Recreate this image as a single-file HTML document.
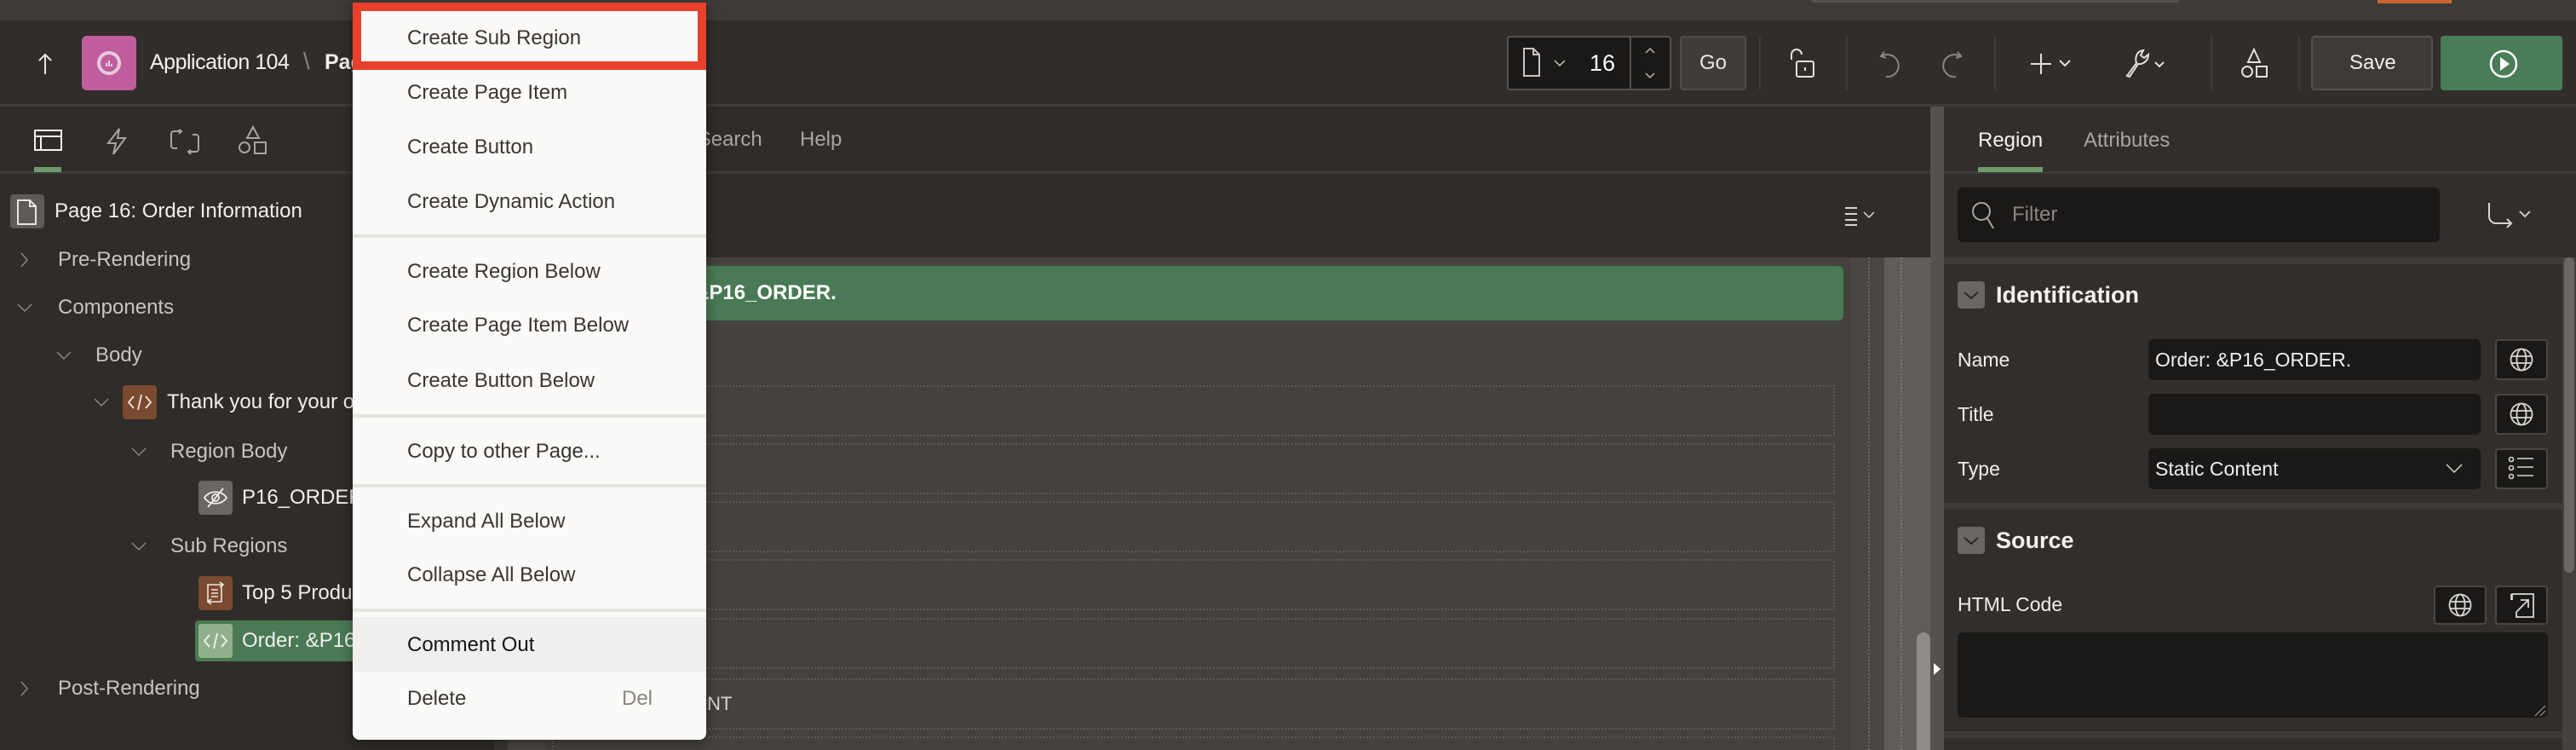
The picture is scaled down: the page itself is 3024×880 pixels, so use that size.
<!DOCTYPE html>
<html style="width:3024px;height:880px;overflow:hidden"><head><meta charset="utf-8"><style>
*{margin:0;padding:0;box-sizing:border-box}
body{width:3024px;height:880px;overflow:hidden;background:#2f2c29;font-family:"Liberation Sans",sans-serif;position:relative}
.a{position:absolute}
.t{position:absolute;white-space:nowrap;line-height:1}
svg{position:absolute;overflow:visible}
.mi{position:absolute;left:478px;font-size:24px;color:#3a3632;white-space:nowrap;transform:translateY(-50%)}
.sep{position:absolute;left:414px;width:415px;height:4px;background:#e6e4e1}
.tl{color:#c8c4bf;font-size:24px}
.tw{color:#f1efed;font-size:24px}
.dot{position:absolute;left:648px;width:1506px;height:60px;border:2px dotted #5e5a55;border-radius:2px}
.ib{position:absolute;background:#1a1917;border:2px solid #4a4743;border-radius:4px}
.inp{position:absolute;background:#1a1917;border-radius:6px}
</style></head><body>
<!-- top strip -->
<div class="a" style="left:0;top:0;width:3024px;height:24px;background:#3e3b37"></div>
<div class="a" style="left:2126px;top:0;width:432px;height:3px;background:#55524e;border-radius:0 0 4px 4px"></div>
<div class="a" style="left:2791px;top:0;width:87px;height:4px;background:#c8652f"></div>
<!-- header -->
<div class="a" style="left:0;top:24px;width:3024px;height:98px;background:#312d2a"></div>
<div class="a" style="left:0;top:122px;width:3024px;height:3px;background:#3e3b37"></div>
<svg style="left:44px;top:62px" width="18" height="26"><path d="M9 2V25M2 9L9 2L16 9" fill="none" stroke="#e8e6e3" stroke-width="2"/></svg>
<div class="a" style="left:96px;top:42px;width:64px;height:64px;background:#bf5d9d;border-radius:6px"></div>
<svg style="left:112px;top:58px" width="32" height="32"><circle cx="16" cy="16" r="12" fill="none" stroke="#e9c9dd" stroke-width="4"/><path d="M13 20v-4M16 20v-7M19 20v-3" stroke="#fff" stroke-width="1.5"/></svg>
<div class="t" style="left:176px;top:61px;font-size:25px;color:#f4f2f0;letter-spacing:-0.5px">Application 104</div>
<div class="t" style="left:356px;top:58px;font-size:28px;color:#8a8682">\</div>
<div class="t" style="left:381px;top:61px;font-size:25px;color:#f4f2f0;font-weight:bold">Page</div>

<!-- toolbar -->
<div class="a" style="left:1769px;top:42px;width:193px;height:64px;background:#1a1917;border:2px solid #55514d;border-radius:4px"></div>
<div class="a" style="left:1913px;top:44px;width:2px;height:60px;background:#55514d"></div>
<svg style="left:1788px;top:56px" width="20" height="34"><path d="M1 1H12L19 8V33H1Z M12 1V8H19" fill="none" stroke="#c9c5c0" stroke-width="2"/></svg>
<svg style="left:1824px;top:70px" width="14" height="8"><path d="M1 1L7 7L13 1" fill="none" stroke="#c9c5c0" stroke-width="1.5"/></svg>
<div class="t" style="left:1866px;top:61px;font-size:27px;color:#fff">16</div>
<svg style="left:1930px;top:54px" width="14" height="40"><path d="M2 8L7 3L12 8M2 32L7 37L12 32" fill="none" stroke="#b8b4af" stroke-width="1.5"/></svg>
<div class="a" style="left:1972px;top:42px;width:78px;height:64px;background:#403d39;border:2px solid #4f4b47;border-radius:4px"></div>
<div class="t" style="left:1995px;top:62px;font-size:24px;color:#e8e6e3">Go</div>
<div class="a" style="left:2065px;top:42px;width:2px;height:64px;background:#3f3c38"></div>
<div class="a" style="left:2167px;top:42px;width:2px;height:64px;background:#3f3c38"></div>
<div class="a" style="left:2341px;top:42px;width:2px;height:64px;background:#3f3c38"></div>
<div class="a" style="left:2595px;top:42px;width:2px;height:64px;background:#3f3c38"></div>
<div class="a" style="left:2698px;top:42px;width:2px;height:64px;background:#3f3c38"></div>
<svg style="left:2100px;top:58px" width="34" height="34"><path d="M3 12V6a6 6 0 0 1 12 0" fill="none" stroke="#e3e1de" stroke-width="2"/><rect x="9" y="14" width="20" height="18" rx="2" fill="none" stroke="#e3e1de" stroke-width="2"/><path d="M19 21v4" stroke="#e3e1de" stroke-width="2"/></svg>
<svg style="left:2206px;top:58px" width="26" height="34"><path d="M6 3L2 8L8 10 M3 8A13 13 0 1 1 8 32" fill="none" stroke="#8a8682" stroke-width="2"/></svg>
<svg style="left:2278px;top:58px" width="26" height="34"><path d="M20 3L24 8L18 10 M23 8A13 13 0 1 0 18 32" fill="none" stroke="#8a8682" stroke-width="2"/></svg>
<svg style="left:2384px;top:62px" width="56" height="26"><path d="M12 1V25M0 13H24M34 9L40 15L46 9" fill="none" stroke="#e3e1de" stroke-width="2"/></svg>
<svg style="left:2494px;top:56px" width="52" height="36"><path d="M3 33L14 18C12 12 14 4 22 3L19 9L23 12L28 8C28 15 22 20 16 19L6 34Z" fill="none" stroke="#e3e1de" stroke-width="2"/><path d="M36 17L41 22L46 17" fill="none" stroke="#e3e1de" stroke-width="2"/></svg>
<svg style="left:2630px;top:56px" width="34" height="36"><path d="M16 2L23 17H9Z" fill="none" stroke="#e3e1de" stroke-width="2"/><circle cx="8" cy="28" r="6" fill="none" stroke="#e3e1de" stroke-width="2"/><rect x="19" y="22" width="12" height="12" fill="none" stroke="#e3e1de" stroke-width="2"/></svg>
<div class="a" style="left:2713px;top:42px;width:143px;height:64px;background:#3e3b37;border:2px solid #55514d;border-radius:4px"></div>
<div class="t" style="left:2758px;top:62px;font-size:24px;color:#f1efed">Save</div>
<div class="a" style="left:2865px;top:42px;width:143px;height:64px;background:#4a7d57;border-radius:4px"></div>
<svg style="left:2922px;top:58px" width="34" height="34"><circle cx="17" cy="17" r="15" fill="none" stroke="#fff" stroke-width="2.5"/><path d="M13 9L24 17L13 25Z" fill="#fff"/></svg>

<!-- left panel -->
<div class="a" style="left:0;top:125px;width:580px;height:755px;background:#2f2c29"></div>
<div class="a" style="left:0;top:201px;width:580px;height:3px;background:#3e3b37"></div>
<svg style="left:40px;top:152px" width="34" height="26"><rect x="1" y="1" width="31" height="23" fill="none" stroke="#f4f2f0" stroke-width="2"/><path d="M1 8H32M8 8V24" stroke="#f4f2f0" stroke-width="2"/></svg>
<div class="a" style="left:40px;top:196px;width:32px;height:6px;background:#6f9a6c"></div>
<svg style="left:124px;top:150px" width="26" height="32"><path d="M16 1L3 18H12L9 31L23 12H14Z" fill="none" stroke="#a9a5a0" stroke-width="2"/></svg>
<svg style="left:200px;top:152px" width="34" height="28"><path d="M12 2H4a3 3 0 0 0-3 3v14a3 3 0 0 0 3 3H8M22 26H30a3 3 0 0 0 3-3V9a3 3 0 0 0-3-3H26M10 0L13 2L10 5M24 24L21 26L24 29" fill="none" stroke="#a9a5a0" stroke-width="2"/></svg>
<svg style="left:280px;top:148px" width="34" height="34"><path d="M17 1L24 14H10Z" fill="none" stroke="#a9a5a0" stroke-width="2"/><circle cx="7" cy="25" r="6" fill="none" stroke="#a9a5a0" stroke-width="2"/><rect x="19" y="19" width="13" height="13" fill="none" stroke="#a9a5a0" stroke-width="2"/></svg>

<div class="a" style="left:12px;top:228px;width:40px;height:40px;background:#5e5a55;border-radius:4px"></div>
<svg style="left:20px;top:234px" width="24" height="30"><path d="M1 1H15L22 8V29H1Z M15 1V8H22" fill="none" stroke="#e8e6e3" stroke-width="2"/></svg>
<div class="t tw" style="left:64px;top:236px;font-size:24px">Page 16: Order Information</div>

<svg style="left:24px;top:296px" width="10" height="18"><path d="M1 1L8 9L1 17" fill="none" stroke="#8a8682" stroke-width="1.5"/></svg>
<div class="t tl" style="left:68px;top:293px">Pre-Rendering</div>
<svg style="left:20px;top:356px" width="18" height="10"><path d="M1 1L9 9L17 1" fill="none" stroke="#8a8682" stroke-width="1.5"/></svg>
<div class="t tl" style="left:68px;top:349px">Components</div>
<svg style="left:66px;top:412px" width="18" height="10"><path d="M1 1L9 9L17 1" fill="none" stroke="#8a8682" stroke-width="1.5"/></svg>
<div class="t tl" style="left:112px;top:405px">Body</div>
<svg style="left:110px;top:467px" width="18" height="10"><path d="M1 1L9 9L17 1" fill="none" stroke="#8a8682" stroke-width="1.5"/></svg>
<div class="a" style="left:144px;top:452px;width:40px;height:40px;background:#7a4a30;border-radius:4px"></div>
<svg style="left:150px;top:462px" width="28" height="20"><path d="M7 3L1 10L7 17M21 3L27 10L21 17M16 1L12 19" fill="none" stroke="#f1e6de" stroke-width="1.8"/></svg>
<div class="t tw" style="left:196px;top:460px">Thank you for your order</div>
<svg style="left:154px;top:525px" width="18" height="10"><path d="M1 1L9 9L17 1" fill="none" stroke="#8a8682" stroke-width="1.5"/></svg>
<div class="t tl" style="left:200px;top:518px">Region Body</div>
<div class="a" style="left:233px;top:564px;width:40px;height:40px;background:#6a6661;border-radius:4px"></div>
<svg style="left:238px;top:572px" width="30" height="24"><path d="M2 12C8 3 22 3 28 12C22 21 8 21 2 12Z" fill="none" stroke="#eee" stroke-width="1.8"/><circle cx="15" cy="12" r="4" fill="none" stroke="#eee" stroke-width="1.8"/><path d="M24 1L6 23" stroke="#eee" stroke-width="1.8"/></svg>
<div class="t tw" style="left:284px;top:572px">P16_ORDER</div>
<svg style="left:154px;top:636px" width="18" height="10"><path d="M1 1L9 9L17 1" fill="none" stroke="#8a8682" stroke-width="1.5"/></svg>
<div class="t tl" style="left:200px;top:629px">Sub Regions</div>
<div class="a" style="left:233px;top:676px;width:40px;height:40px;background:#7a4a30;border-radius:4px"></div>
<svg style="left:240px;top:682px" width="26" height="28"><path d="M4 4H20V24H4Z M8 10H16M8 14H16M8 18H16M18 1L22 4L18 7M8 21L4 24L8 27" fill="none" stroke="#f1e6de" stroke-width="1.6"/></svg>
<div class="t tw" style="left:284px;top:684px">Top 5 Products</div>
<div class="a" style="left:229px;top:728px;width:190px;height:48px;background:#4a7a55;border-radius:4px"></div>
<div class="a" style="left:233px;top:732px;width:40px;height:40px;background:#8fb08a;border-radius:3px"></div>
<svg style="left:239px;top:742px" width="28" height="20"><path d="M7 3L1 10L7 17M21 3L27 10L21 17M16 1L12 19" fill="none" stroke="#eef4ec" stroke-width="1.8"/></svg>
<div class="t tw" style="left:284px;top:740px">Order: &amp;P16_ORDER.</div>
<svg style="left:24px;top:799px" width="10" height="18"><path d="M1 1L8 9L1 17" fill="none" stroke="#8a8682" stroke-width="1.5"/></svg>
<div class="t tl" style="left:68px;top:796px">Post-Rendering</div>

<!-- divider -->
<div class="a" style="left:580px;top:125px;width:16px;height:755px;background:#3a3733"></div>

<!-- middle panel -->
<div class="a" style="left:596px;top:125px;width:1670px;height:177px;background:#2f2c29"></div>
<div class="a" style="left:596px;top:201px;width:1670px;height:3px;background:#3e3b37"></div>
<div class="t" style="left:756px;top:152px;font-size:24px;color:#a9a5a0">Page Search</div>
<div class="t" style="left:939px;top:152px;font-size:24px;color:#a9a5a0">Help</div>
<svg style="left:2166px;top:242px" width="56" height="22"><path d="M0 2H14M0 9H14M0 16H14M0 22H14" stroke="#d8d5d1" stroke-width="2"/><path d="M22 7L28 13L34 7" fill="none" stroke="#d8d5d1" stroke-width="1.5"/></svg>
<div class="a" style="left:596px;top:302px;width:1577px;height:578px;background:#45423e"></div>
<div class="a" style="left:596px;top:302px;width:44px;height:578px;background:#4a4743"></div>
<div class="a" style="left:640px;top:312px;width:1524px;height:64px;background:#4a7a55;border-radius:6px"></div>
<div class="t" style="left:735px;top:332px;font-size:24px;color:#fff;font-weight:bold">Order: &amp;P16_ORDER.</div>
<div class="dot" style="top:452px"></div>
<div class="dot" style="top:520px"></div>
<div class="dot" style="top:588px"></div>
<div class="dot" style="top:656px"></div>
<div class="dot" style="top:725px"></div>
<div class="dot" style="top:796px"></div>
<div class="dot" style="top:864px"></div>
<div class="t" style="left:666px;top:744px;font-size:22px;color:#d8d5d1">REGION_BODY</div>
<div class="t" style="left:582px;top:815px;font-size:22px;color:#d8d5d1">SUB_REGIONS_CONTENT</div>
<div class="a" style="left:2173px;top:302px;width:39px;height:578px;background:#4a4743"></div>
<div class="a" style="left:2193px;top:302px;width:0;height:578px;border-left:2px dotted #6a6661"></div>
<div class="a" style="left:2212px;top:302px;width:54px;height:578px;background:#605c58"></div>
<div class="a" style="left:2231px;top:302px;width:0;height:578px;border-left:2px dotted #7a7671"></div>
<div class="a" style="left:2250px;top:742px;width:16px;height:138px;background:#8f8c87;border-radius:8px 8px 0 0"></div>
<!-- panel divider -->
<div class="a" style="left:2266px;top:125px;width:16px;height:755px;background:#55514d"></div>
<svg style="left:2270px;top:778px" width="8" height="14"><path d="M0 0L8 7L0 14Z" fill="#fff"/></svg>

<!-- right panel -->
<div class="a" style="left:2282px;top:125px;width:742px;height:755px;background:#312e2b"></div>
<div class="a" style="left:2282px;top:201px;width:742px;height:3px;background:#3e3b37"></div>
<div class="t" style="left:2322px;top:153px;font-size:24px;color:#f4f2f0">Region</div>
<div class="t" style="left:2446px;top:153px;font-size:24px;color:#a9a5a0">Attributes</div>
<div class="a" style="left:2322px;top:196px;width:76px;height:6px;background:#6f9a6c"></div>
<div class="inp" style="left:2298px;top:220px;width:566px;height:64px"></div>
<svg style="left:2314px;top:236px" width="28" height="34"><circle cx="12" cy="12" r="10" fill="none" stroke="#a9a5a0" stroke-width="2"/><path d="M19 20L26 32" stroke="#a9a5a0" stroke-width="2"/></svg>
<div class="t" style="left:2362px;top:240px;font-size:24px;color:#8a8682">Filter</div>
<svg style="left:2920px;top:238px" width="58" height="30"><path d="M2 0V16a8 8 0 0 0 8 8H28M23 19L28 24L23 29" fill="none" stroke="#d8d5d1" stroke-width="2"/><path d="M38 10L44 16L50 10" fill="none" stroke="#d8d5d1" stroke-width="1.8"/></svg>
<div class="a" style="left:2282px;top:302px;width:742px;height:8px;background:#3e3b37"></div>
<div class="a" style="left:2282px;top:590px;width:742px;height:8px;background:#3e3b37"></div>
<div class="a" style="left:2282px;top:858px;width:742px;height:8px;background:#3e3b37"></div>
<div class="a" style="left:3008px;top:302px;width:16px;height:578px;background:#45423e"></div>
<div class="a" style="left:3010px;top:302px;width:12px;height:370px;background:#6a6661;border-radius:6px"></div>

<div class="a" style="left:2298px;top:330px;width:32px;height:32px;background:#6a6661;border-radius:4px"></div>
<svg style="left:2305px;top:342px" width="18" height="10"><path d="M1 1L9 8L17 1" fill="none" stroke="#222" stroke-width="1.8"/></svg>
<div class="t" style="left:2343px;top:333px;font-size:27px;color:#f4f2f0;font-weight:bold">Identification</div>
<div class="t" style="left:2298px;top:411px;font-size:23px;color:#f1efed">Name</div>
<div class="t" style="left:2298px;top:475px;font-size:23px;color:#f1efed">Title</div>
<div class="t" style="left:2298px;top:539px;font-size:23px;color:#f1efed">Type</div>
<div class="inp" style="left:2522px;top:398px;width:390px;height:48px"></div>
<div class="t" style="left:2530px;top:411px;font-size:23px;color:#f1efed">Order: &amp;P16_ORDER.</div>
<div class="inp" style="left:2522px;top:462px;width:390px;height:48px"></div>
<div class="inp" style="left:2522px;top:526px;width:390px;height:48px"></div>
<div class="t" style="left:2530px;top:539px;font-size:23px;color:#f1efed">Static Content</div>
<svg style="left:2871px;top:544px" width="20" height="12"><path d="M1 1L10 10L19 1" fill="none" stroke="#d8d5d1" stroke-width="1.5"/></svg>
<div class="ib" style="left:2929px;top:398px;width:62px;height:48px"></div>
<div class="ib" style="left:2929px;top:462px;width:62px;height:48px"></div>
<div class="ib" style="left:2929px;top:526px;width:62px;height:48px"></div>
<svg style="left:2946px;top:408px" width="28" height="28"><circle cx="14" cy="14" r="12.5" fill="none" stroke="#d8d5d1" stroke-width="1.8"/><ellipse cx="14" cy="14" rx="5.5" ry="12.5" fill="none" stroke="#d8d5d1" stroke-width="1.8"/><path d="M2 10H26M2 18H26" stroke="#d8d5d1" stroke-width="1.8"/></svg>
<svg style="left:2946px;top:472px" width="28" height="28"><circle cx="14" cy="14" r="12.5" fill="none" stroke="#d8d5d1" stroke-width="1.8"/><ellipse cx="14" cy="14" rx="5.5" ry="12.5" fill="none" stroke="#d8d5d1" stroke-width="1.8"/><path d="M2 10H26M2 18H26" stroke="#d8d5d1" stroke-width="1.8"/></svg>
<svg style="left:2944px;top:536px" width="32" height="28"><circle cx="4" cy="3" r="2.5" fill="none" stroke="#d8d5d1" stroke-width="1.6"/><circle cx="4" cy="13" r="2.5" fill="none" stroke="#d8d5d1" stroke-width="1.6"/><circle cx="4" cy="23" r="2.5" fill="none" stroke="#d8d5d1" stroke-width="1.6"/><path d="M11 2H30M11 12H30M11 22H30" stroke="#d8d5d1" stroke-width="1.6"/></svg>

<div class="a" style="left:2298px;top:618px;width:32px;height:32px;background:#6a6661;border-radius:4px"></div>
<svg style="left:2305px;top:630px" width="18" height="10"><path d="M1 1L9 8L17 1" fill="none" stroke="#222" stroke-width="1.8"/></svg>
<div class="t" style="left:2343px;top:621px;font-size:27px;color:#f4f2f0;font-weight:bold">Source</div>
<div class="t" style="left:2298px;top:698px;font-size:23px;color:#f1efed">HTML Code</div>
<div class="ib" style="left:2857px;top:687px;width:62px;height:46px"></div>
<div class="ib" style="left:2929px;top:687px;width:62px;height:46px"></div>
<svg style="left:2874px;top:696px" width="28" height="28"><circle cx="14" cy="14" r="12.5" fill="none" stroke="#d8d5d1" stroke-width="1.8"/><ellipse cx="14" cy="14" rx="5.5" ry="12.5" fill="none" stroke="#d8d5d1" stroke-width="1.8"/><path d="M2 10H26M2 18H26" stroke="#d8d5d1" stroke-width="1.8"/></svg>
<svg style="left:2946px;top:696px" width="30" height="30"><path d="M8 1H28V28H8V22M3 8V1H8" fill="none" stroke="#d8d5d1" stroke-width="1.8"/><path d="M2 1V8M8 22L22 8M13 8H22V17" fill="none" stroke="#d8d5d1" stroke-width="1.8"/></svg>
<div class="inp" style="left:2298px;top:742px;width:693px;height:100px"></div>
<svg style="left:2976px;top:828px" width="12" height="12"><path d="M0 12L12 0M6 12L12 6" stroke="#8a8682" stroke-width="1.3"/></svg>

<!-- context menu -->
<div class="a" style="left:414px;top:3px;width:415px;height:865px;background:#fbfaf8;border-radius:0 0 8px 8px;box-shadow:0 4px 16px rgba(0,0,0,.4)"></div>
<div class="a" style="left:414px;top:3px;width:415px;height:79px;border:10px solid #e8402a"></div>
<div class="mi" style="top:45px">Create Sub Region</div>
<div class="mi" style="top:109px">Create Page Item</div>
<div class="mi" style="top:173px">Create Button</div>
<div class="mi" style="top:237px">Create Dynamic Action</div>
<div class="sep" style="top:275px"></div>
<div class="mi" style="top:319px">Create Region Below</div>
<div class="mi" style="top:382px">Create Page Item Below</div>
<div class="mi" style="top:447px">Create Button Below</div>
<div class="sep" style="top:486px"></div>
<div class="mi" style="top:530px">Copy to other Page...</div>
<div class="sep" style="top:568px"></div>
<div class="mi" style="top:612px">Expand All Below</div>
<div class="mi" style="top:675px">Collapse All Below</div>
<div class="sep" style="top:714px"></div>
<div class="a" style="left:414px;top:724px;width:415px;height:64px;background:#f0efed"></div>
<div class="mi" style="top:757px;color:#161513">Comment Out</div>
<div class="mi" style="top:820px">Delete</div>
<div class="t" style="left:730px;top:808px;font-size:24px;color:#8a8682">Del</div>
</body></html>
